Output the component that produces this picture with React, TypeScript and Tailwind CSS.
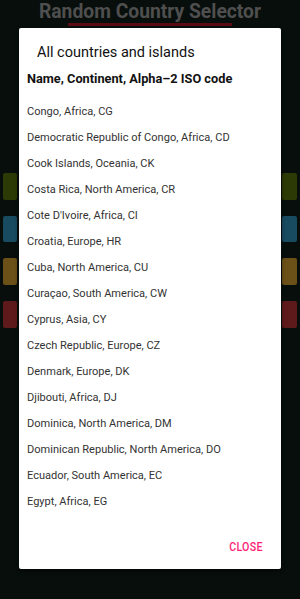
import React from "react";

const items = [
  "Congo, Africa, CG",
  "Democratic Republic of Congo, Africa, CD",
  "Cook Islands, Oceania, CK",
  "Costa Rica, North America, CR",
  "Cote D'Ivoire, Africa, CI",
  "Croatia, Europe, HR",
  "Cuba, North America, CU",
  "Curaçao, South America, CW",
  "Cyprus, Asia, CY",
  "Czech Republic, Europe, CZ",
  "Denmark, Europe, DK",
  "Djibouti, Africa, DJ",
  "Dominica, North America, DM",
  "Dominican Republic, North America, DO",
  "Ecuador, South America, EC",
  "Egypt, Africa, EG",
];

export default function App() {
  return (
    <div
      className="relative w-[300px] h-[599px] overflow-hidden bg-[#070e0b]"
      style={{ fontFamily: "Roboto, 'Noto Sans', sans-serif" }}
    >
      {/* background page */}
      <div className="flex flex-col items-center">
        <div className="pt-[1px] text-[19.3px] font-bold leading-[22px] text-[#4f4f4f] whitespace-nowrap">
          Random Country Selector
        </div>
        <div className="w-[164px] h-[3px] bg-[#5a0a12]" />
      </div>
      <div className="absolute left-[3px] top-[173px] flex flex-col gap-[16px]">
        <div className="w-[14px] h-[27px] rounded-[2px] bg-[#2c3a05]" />
        <div className="w-[14px] h-[26px] rounded-[2px] bg-[#184a60]" />
        <div className="w-[14px] h-[27px] rounded-[2px] bg-[#6b5018]" />
        <div className="w-[14px] h-[27px] rounded-[2px] bg-[#5e1a1a]" />
      </div>
      <div className="absolute left-[282px] top-[173px] flex flex-col gap-[16px]">
        <div className="w-[15px] h-[27px] rounded-[2px] bg-[#2c3a05]" />
        <div className="w-[15px] h-[26px] rounded-[2px] bg-[#184a60]" />
        <div className="w-[15px] h-[27px] rounded-[2px] bg-[#6b5018]" />
        <div className="w-[15px] h-[27px] rounded-[2px] bg-[#5e1a1a]" />
      </div>

      {/* dialog */}
      <div className="absolute left-[19px] top-[28px] w-[262px] h-[541px] bg-white rounded-[2px] shadow-[0_2px_4px_rgba(0,0,0,0.5)] flex flex-col">
        <div className="pl-[18px] pt-[14.5px] h-[34.5px] leading-[20px] text-[14.5px] text-[#111] whitespace-nowrap">
          All countries and islands
        </div>
        <div className="pl-[8px] pt-[7px] leading-[18px] text-[12.75px] font-bold text-[#111] whitespace-nowrap">
          Name, Continent, Alpha–2 ISO code
        </div>
        <div className="pl-[8px] pt-[11.5px] flex flex-col">
          {items.map((t) => (
            <div key={t} className="h-[26px] flex items-center">
              <span className="inline-block origin-left scale-x-[0.96] text-[11.5px] text-[#333] whitespace-nowrap">
                {t}
              </span>
            </div>
          ))}
        </div>
        <div className="flex-1" />
        <div className="flex justify-end pr-[18px] pb-[13px]">
          <span className="inline-block origin-right scale-x-[0.89] text-[12px] font-medium tracking-[0.3px] text-[#ff1f7a]">
            CLOSE
          </span>
        </div>
      </div>
    </div>
  );
}
